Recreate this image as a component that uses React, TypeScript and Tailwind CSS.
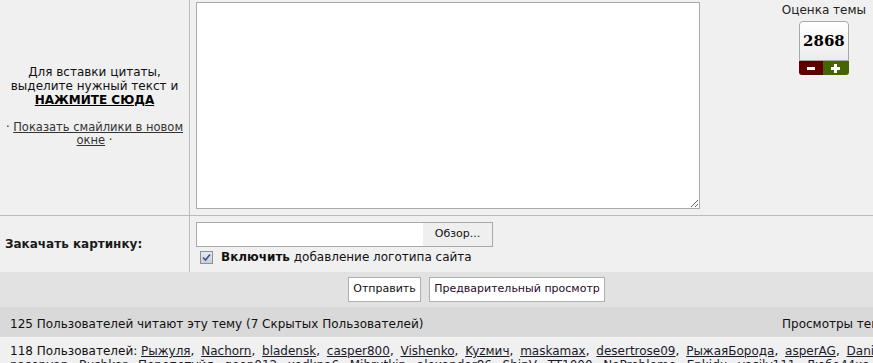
import React from "react";

const font = { fontFamily: '"DejaVu Sans", Verdana, sans-serif' };

const users1 = ["Рыжуля", "Nachorn", "bladensk", "casper800", "Vishenko", "Kyzмич", "maskamax", "desertrose09", "РыжаяБорода", "asperAG", "Danila"];
const users2 = ["pasepyan", "Rushkar", "Перепетуйя", "geen012", "xedkpa6", "Mibrutkin", "alexander86", "ShipV", "TT1000", "NoProbleme", "Enkidu", "vasily111", "Любо44ка", "Sergey"];

function UserLine({ names, prefix }: { names: string[]; prefix?: string }) {
  return (
    <div className="whitespace-nowrap leading-[14px]">
      {prefix}
      <span className="[word-spacing:3px]">
        {names.map((n, i) => (
          <React.Fragment key={n}>
            <a className="underline text-[#1a1a2a]">{n}</a>
            {i < names.length - 1 ? ", " : ""}
          </React.Fragment>
        ))}
      </span>
    </div>
  );
}

export default function App() {
  return (
    <div className="w-[873px] h-[363px] overflow-hidden bg-[#f0f0f0] text-[12px] text-[#111]" style={font}>
      {/* Row 1 */}
      <div className="flex h-[216px] border-b border-[#bcbcbc]">
        <div className="w-[190px] shrink-0 border-r border-[#bcbcbc] flex flex-col items-center justify-center text-center leading-[14px] pb-[4px]">
          <div>
            Для вставки цитаты,
            <br />
            выделите нужный текст и
            <br />
            <a className="font-bold underline text-black">НАЖМИТЕ СЮДА</a>
          </div>
          <div className="mt-[14px] leading-[13px] text-[11.5px] text-[#222] w-[188px]">
            · <a className="underline text-[#333]">Показать смайлики в новом</a>
            <br />
            <a className="underline text-[#333]">окне</a> ·
          </div>
        </div>
        <div className="pl-[6px] pt-[2px]">
          <textarea className="block w-[504px] h-[207px] bg-white border border-[#a9a9a9] outline-none" />
        </div>
        <div className="flex-1 flex justify-end pr-[7px] pt-[2px]">
          <div className="flex flex-col items-center">
            <div className="leading-[16px] text-[#222]">Оценка темы</div>
            <div className="mt-[3px] w-[50px]">
              <div className="h-[40px] rounded-t-[4px] border border-[#a8a8a8] bg-gradient-to-b from-white to-[#ececec] flex items-center justify-center">
                <span className="font-bold text-[15px] text-black" style={{ fontFamily: '"DejaVu Serif", "Liberation Serif", serif' }}>2868</span>
              </div>
              <div className="flex h-[14px] rounded-b-[3px] overflow-hidden">
                <div className="w-[24px] bg-[#5c0000] flex items-center justify-center">
                  <div className="w-[8px] h-[3px] bg-white" />
                </div>
                <div className="flex-1 bg-[#466400] flex items-center justify-center relative">
                  <div className="w-[9px] h-[3px] bg-white" />
                  <div className="absolute w-[3px] h-[9px] bg-white" />
                </div>
              </div>
            </div>
          </div>
        </div>
      </div>

      {/* Row 2 */}
      <div className="flex h-[56px]">
        <div className="w-[190px] shrink-0 border-r border-[#bcbcbc] flex items-center pl-[5px] font-bold text-[#1a1a1a]">
          Закачать картинку:
        </div>
        <div className="pl-[6px] pt-[6px]">
          <div className="flex w-[297px] h-[25px] border border-[#a9a9a9]">
            <div className="w-[226px] bg-white" />
            <div className="flex-1 bg-[#efefef] flex items-center justify-center text-[11px] text-[#111]">Обзор...</div>
          </div>
          <div className="flex items-center mt-[3px] pl-[4px] leading-[14px]">
            <div className="w-[13px] h-[13px] border border-[#8e8f8f] bg-gradient-to-b from-[#e6e9f0] to-[#c9cfdc] flex items-center justify-center">
              <svg width="9" height="9" viewBox="0 0 9 9">
                <path d="M1 4.5 L3.5 7 L8 1.5" fill="none" stroke="#3c4f86" strokeWidth="1.6" />
              </svg>
            </div>
            <span className="ml-[8px] text-[12px]">
              <b>Включить</b> добавление логотипа сайта
            </span>
          </div>
        </div>
      </div>

      {/* Row 3: buttons */}
      <div className="h-[35px] bg-[#e2e2e2] flex items-center pl-[348px] gap-[8px]">
        <button className="h-[25px] w-[73px] bg-white border border-[#b0b0b0] text-[11px] text-[#111] whitespace-nowrap" style={font}>Отправить</button>
        <button className="h-[25px] w-[176px] bg-white border border-[#b0b0b0] text-[11px] text-[#2a0a2a] whitespace-nowrap" style={font}>Предварительный просмотр</button>
      </div>

      {/* Row 4: readers */}
      <div className="h-[30px] bg-[#d9d9d9] flex items-center pt-[4px] whitespace-nowrap">
        <div className="pl-[10px] w-[782px] shrink-0">125 Пользователей читают эту тему (7 Скрытых Пользователей)</div>
        <div className="shrink-0">Просмотры темы: 1234567</div>
      </div>

      {/* Row 5: users */}
      <div className="border-t border-[#f7f7f7] bg-[#f0f0f0] pl-[10px] pt-[6px]">
        <UserLine prefix="118 Пользователей: " names={users1} />
        <UserLine names={users2} />
      </div>
    </div>
  );
}
